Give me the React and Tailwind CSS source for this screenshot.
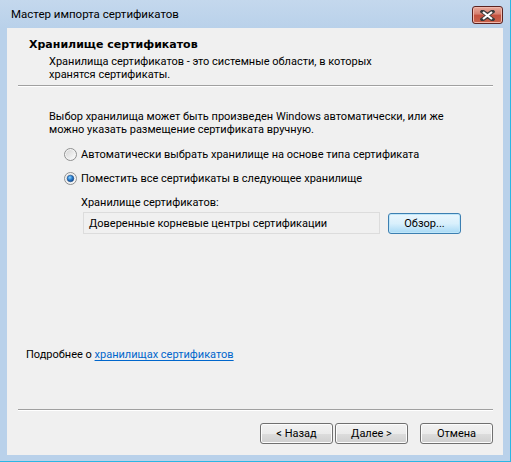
import React from "react";

const body = { fontFamily: 'Roboto, "Noto Sans", sans-serif' };

const Radio = ({ checked }) => (
  <svg width="13" height="13" viewBox="0 0 13 13" className="shrink-0">
    <defs>
      <linearGradient id={checked ? "rgc" : "rgu"} x1="0" y1="0" x2="1" y2="1">
        <stop offset="0" stopColor="#d6d6d6" />
        <stop offset="1" stopColor="#fbfbfb" />
      </linearGradient>
      <radialGradient id="dot" cx="0.4" cy="0.35" r="0.7">
        <stop offset="0" stopColor="#8fd6ff" />
        <stop offset="0.5" stopColor="#2b7fd0" />
        <stop offset="1" stopColor="#113f82" />
      </radialGradient>
    </defs>
    <circle cx="6.5" cy="6.5" r="6" fill="#f4f4f4" stroke="#8e8f8f" />
    <circle cx="6.5" cy="6.5" r="4.5" fill={`url(#${checked ? "rgc" : "rgu"})`} />
    {checked && <circle cx="6.5" cy="6.5" r="3.3" fill="url(#dot)" stroke="#1a4f8c" strokeWidth="0.6" />}
  </svg>
);

const Button = ({ children, primary }) => (
  <button
    className={
      primary
        ? "w-[73px] h-[21px] rounded-[3px] border border-[#3c7fb1] bg-gradient-to-b from-[#eaf6fd] via-[#d9f0fc] to-[#a7d9f5] text-[11px] text-black leading-none shadow-[inset_0_0_0_1px_#bfe6f9]"
        : "w-[73px] h-[21px] rounded-[3px] border border-[#707070] bg-[linear-gradient(#f2f2f2_0%,#ebebeb_50%,#dddddd_50%,#cfcfcf_100%)] text-[11px] text-black leading-none shadow-[inset_0_0_0_1px_#fcfcfc]"
    }
    style={body}
  >
    {children}
  </button>
);

export default function App() {
  return (
    <div className="w-[511px] h-[462px] flex flex-col bg-[#b9d1ea] border-r border-b border-[#2bb6e4]" style={body}>
      {/* title bar */}
      <div className="h-[28px] shrink-0 flex items-start bg-gradient-to-b from-[#c4d8ed] to-[#b9d1ea]">
        <span className="pl-[11px] pt-[7px] text-[11.5px] leading-[14px] text-black">Мастер импорта сертификатов</span>
        <div className="ml-auto mt-[6px] mr-[7px] w-[31px] h-[18px] rounded-[3px] border border-[#5b2320] bg-[linear-gradient(#e9a99c_0%,#d47f6f_45%,#c4513f_50%,#c7634c_100%)] flex items-center justify-center shadow-[inset_0_0_0_1px_#f0b8ac]">
          <svg width="15" height="11" viewBox="0 0 15 11">
            <path d="M2.5 1.5 L7.5 5 L12.5 1.5 M2.5 9.5 L7.5 6 L12.5 9.5" stroke="#3b3b3b" strokeWidth="4" fill="none" strokeLinecap="square" />
            <path d="M3 2 L12 9 M12 2 L3 9" stroke="#ffffff" strokeWidth="2.2" fill="none" />
          </svg>
        </div>
      </div>
      {/* content */}
      <div className="ml-[7px] mr-[7px] h-[427px] bg-[#f0f0f0] flex flex-col text-[11px] text-black">
        <div className="pl-[22px] pt-[10px] leading-[13px] font-bold text-[11px]" style={{ fontFamily: '"DejaVu Sans", Verdana, sans-serif' }}>
          Хранилище сертификатов
        </div>
        <div className="pl-[42px] mt-[4px] leading-[13px]">
          <div>Хранилища сертификатов - это системные области, в которых</div>
          <div>хранятся сертификаты.</div>
        </div>
        <div className="mt-[4px] ml-[11px] mr-[10px] h-[2px] border-t border-[#a0a0a0] border-b border-b-white" />
        <div className="pl-[42px] mt-[23px] leading-[13px]">
          <div>Выбор хранилища может быть произведен Windows автоматически, или же</div>
          <div>можно указать размещение сертификата вручную.</div>
        </div>
        <div className="pl-[57px] mt-[12px] h-[13px] flex items-center gap-[4px] leading-[13px]">
          <Radio />
          <span>Автоматически выбрать хранилище на основе типа сертификата</span>
        </div>
        <div className="pl-[57px] mt-[11px] h-[13px] flex items-center gap-[4px] leading-[13px]">
          <Radio checked />
          <span>Поместить все сертификаты в следующее хранилище</span>
        </div>
        <div className="pl-[74px] mt-[11px] leading-[13px]">Хранилище сертификатов:</div>
        <div className="pl-[76px] mt-[3px] flex items-start">
          <div className="w-[297px] h-[22px] border border-[#dcdcdc] bg-[#f0f0f0] pl-[5px] flex items-center leading-[13px]">
            Доверенные корневые центры сертификации
          </div>
          <div className="ml-[8px] mt-[1px]">
            <Button primary>Обзор...</Button>
          </div>
        </div>
        <div className="flex-1" />
        <div className="pl-[19px] leading-[13px]">
          Подробнее о{" "}
          <span className="text-[#0066cc] underline underline-offset-2">хранилищах сертификатов</span>
        </div>
        <div className="mt-[48px] ml-[11px] mr-[10px] h-[2px] border-t border-[#a0a0a0] border-b border-b-white" />
        <div className="mt-[12px] mb-[11px] pr-[10px] flex justify-end">
          <Button>&lt; Назад</Button>
          <div className="ml-[2px]">
            <Button>Далее &gt;</Button>
          </div>
          <div className="ml-[12px]">
            <Button>Отмена</Button>
          </div>
        </div>
      </div>
    </div>
  );
}
